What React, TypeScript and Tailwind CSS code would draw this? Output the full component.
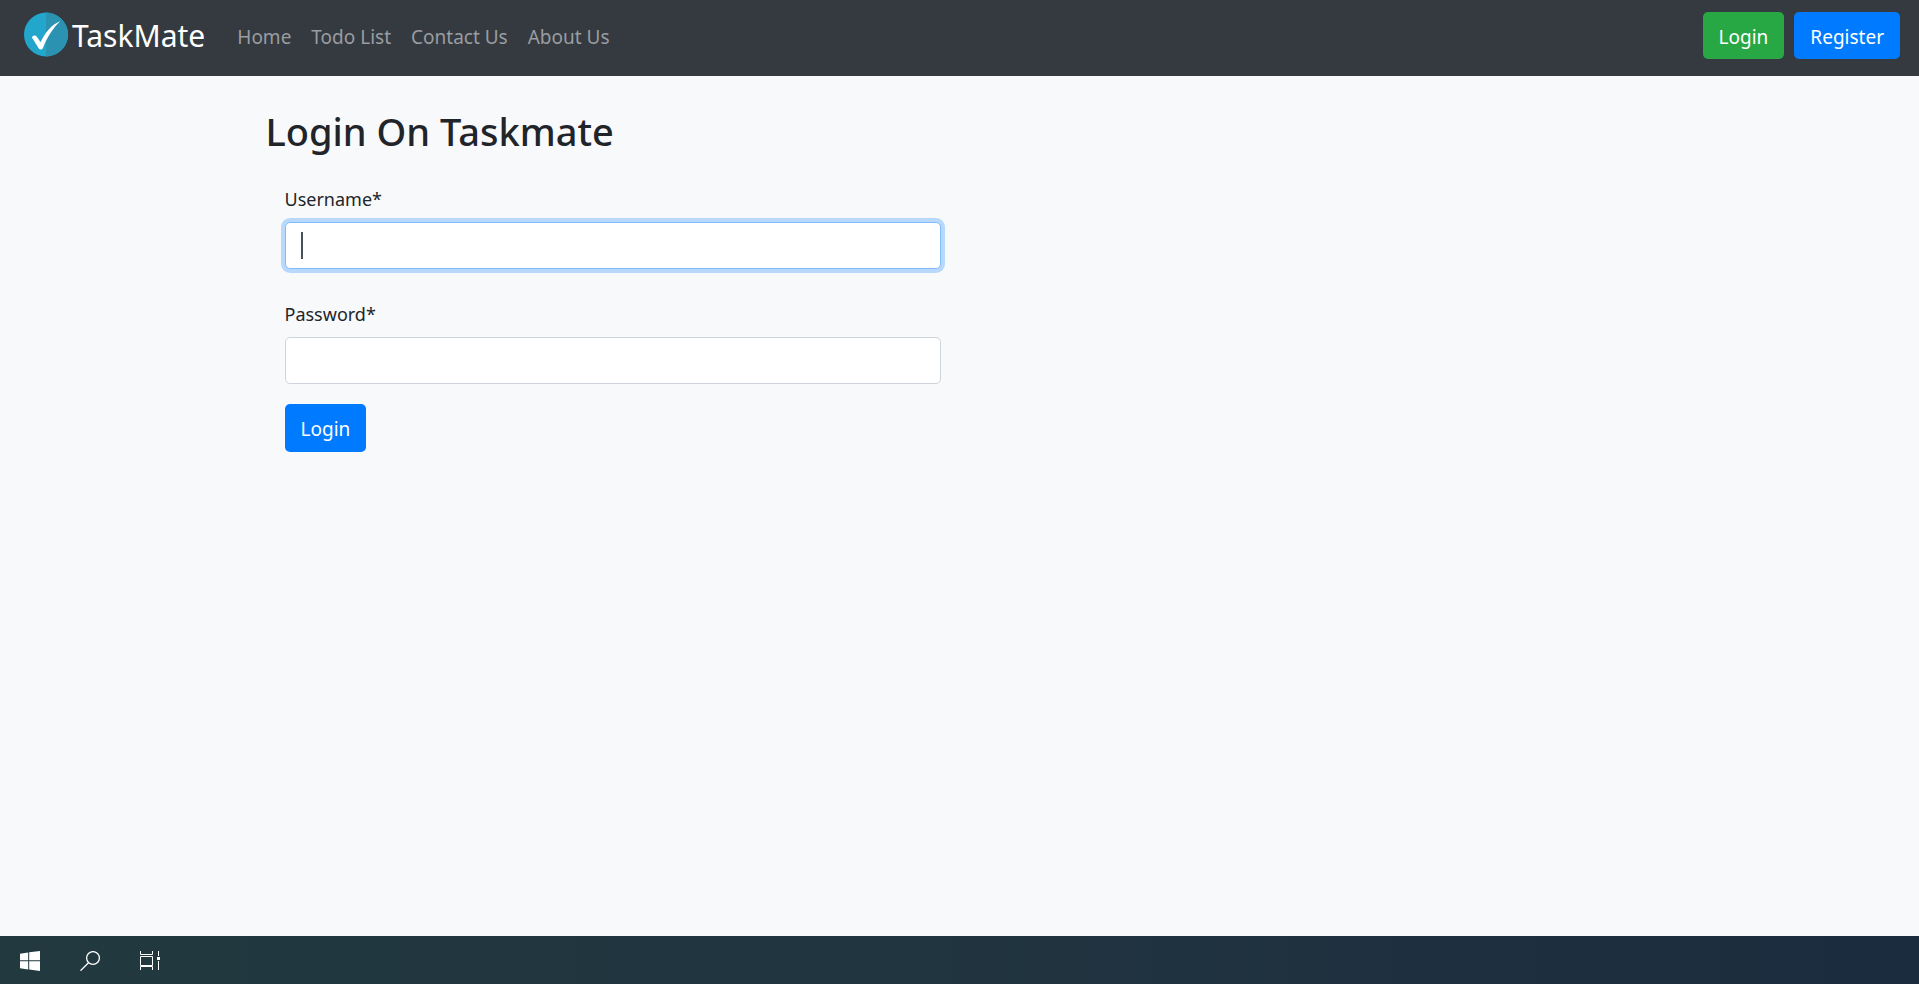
import { useState } from "react";

const links = ["Home", "Todo List", "Contact Us", "About Us"];

function Logo() {
  return (
    <a href="#" className="flex items-center gap-1 text-white">
      <svg viewBox="0 0 44 45" className="h-[45px] w-11" aria-hidden="true">
        <circle cx="22" cy="22.5" r="22" fill="#22a6cc" />
        <path d="M22 .5a22 22 0 0 1 0 44z" fill="#2b93b1" />
        <path
          d="M7.8 25.2c1.5-2 3.500-2.300 4.800-.6l4 5.700C21 20.800 27.500 12.500 36.200 9.200 28.500 16.500 23 25.500 18.800 36.200c-1 1.700-3 1.900-4 .3z"
          fill="#fff"
        />
      </svg>
      <span className="pt-0.5 text-[30px] leading-10">TaskMate</span>
    </a>
  );
}

function Navbar() {
  return (
    <header className="flex h-[76px] shrink-0 items-start bg-[#343a40] pt-3 pr-[19px] pl-6">
      <Logo />
      <nav className="ml-8 flex h-[50px] items-center gap-5">
        {links.map((name) => (
          <a key={name} href="#" className="text-[19px] leading-[30px] text-[#9a9da0]">
            {name}
          </a>
        ))}
      </nav>
      <div className="ml-auto flex gap-2.5">
        <a href="#" className="flex h-[47px] items-center rounded-[5px] bg-[#28a745] px-4 pt-[3px] text-[19px] text-white">
          Login
        </a>
        <a href="#" className="flex h-[47px] items-center rounded-[5px] bg-[#007bff] px-4 pt-[3px] text-[19px] text-white">
          Register
        </a>
      </div>
    </header>
  );
}

function LoginForm() {
  const [username, setUsername] = useState("");
  return (
    <main className="mx-auto w-full max-w-[1388px] grow pt-[31px]">
      <h1 className="text-[38px] leading-12 font-medium">Login On Taskmate</h1>
      <form className="w-1/2 px-[19px] pt-[29px]" onSubmit={(e) => e.preventDefault()}>
        <label htmlFor="username" className="mb-2 block text-lg leading-[30px]">
          Username*
        </label>
        <div className="relative mb-[30px]">
          <input
            id="username"
            value={username}
            onChange={(e) => setUsername(e.target.value)}
            className="block h-[47px] w-full rounded-[5px] border border-[#80bdff] bg-white px-4 text-lg text-[#495057] caret-transparent ring-4 ring-[#b9d9fc] outline-none"
          />
          {username === "" && (
            <span className="pointer-events-none absolute top-2.5 left-4 h-[27px] w-0.5 bg-[#495057]" />
          )}
        </div>
        <label htmlFor="password" className="mb-2 block text-lg leading-[30px]">
          Password*
        </label>
        <input
          id="password"
          type="password"
          className="mb-5 block h-[47px] w-full rounded-[5px] border border-[#ced4da] bg-white px-4 text-lg outline-none"
        />
        <button type="submit" className="h-12 rounded-[5px] bg-[#007bff] px-4 pt-[3px] text-[19px] text-white">
          Login
        </button>
      </form>
    </main>
  );
}

function Taskbar() {
  return (
    <footer className="flex h-12 shrink-0 items-center gap-10 bg-linear-to-r from-[#22393f] via-[#20343f] via-50% to-[#1c2c3f] px-5 pt-0.5">
      <button type="button" aria-label="Start">
        <svg viewBox="0 0 20 20" className="size-5" fill="#fff">
          <path d="M0 2.700 8.200 1.500V9.200H0zM9.200 1.300 20 0v9.200H9.200zM0 10.200h8.200v8.200L0 17.300zM9.200 10.200H20V20L9.200 18.600z" />
        </svg>
      </button>
      <button type="button" aria-label="Search">
        <svg viewBox="0 0 20 20" className="size-5" fill="none" stroke="#fff" strokeWidth="1.300">
          <circle cx="13" cy="7" r="6.400" />
          <path d="M8.500 11.700.5 19.700" />
        </svg>
      </button>
      <button type="button" aria-label="Task view">
        <svg viewBox="0 0 20 20" className="size-5" fill="none" stroke="#fff">
          <path d="M.5 0v3.500h12V0M.5 5.500h12v9H.5zM.5 19v-3.500h12V19M18.500 0v5M18.500 10v9" />
          <path d="M17 6h3v3h-3z" fill="#fff" stroke="none" />
        </svg>
      </button>
    </footer>
  );
}

export default function App() {
  return (
    <div className="flex min-h-screen flex-col bg-[#f8f9fb] font-['Noto_Sans',sans-serif] text-[#212529]">
      <Navbar />
      <LoginForm />
      <Taskbar />
    </div>
  );
}
